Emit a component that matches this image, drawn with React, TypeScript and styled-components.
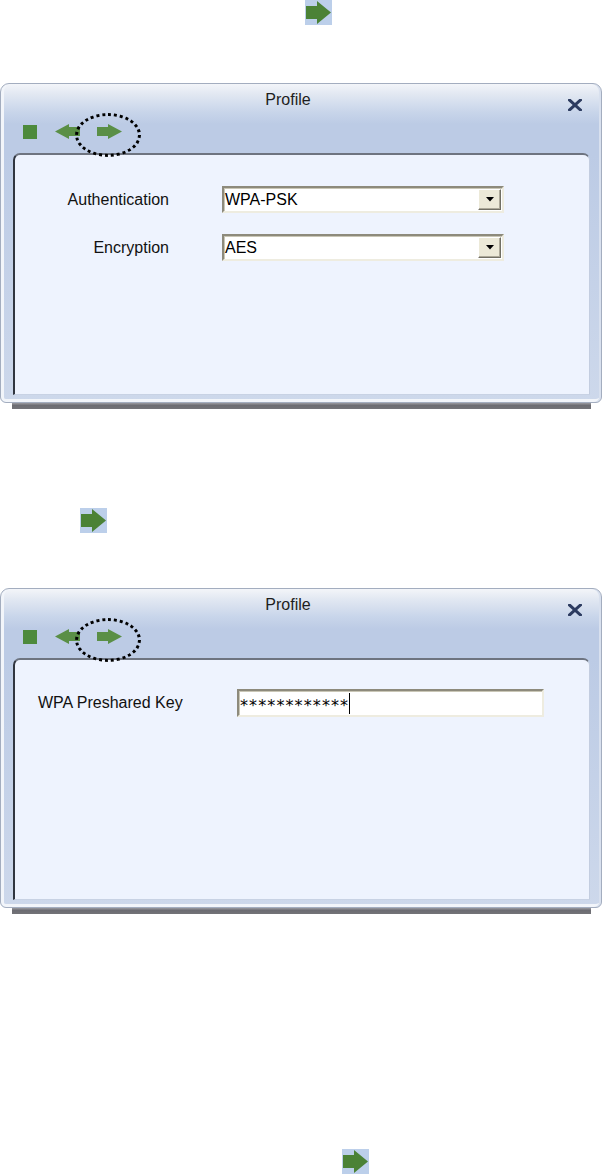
import React from "react";
import styled, { createGlobalStyle } from "styled-components";

const Global = createGlobalStyle`
  html, body { margin: 0; padding: 0; background: #ffffff; }
  body { font-family: "Liberation Sans", Arial, sans-serif; }
  * { box-sizing: border-box; }
`;

const Page = styled.div`
  width: 602px;
  height: 1174px;
  overflow: hidden;
  background: #ffffff;
  display: flex;
  flex-direction: column;
`;

const IconLine = styled.div<{ $left: number; $top: number }>`
  display: flex;
  padding-left: ${(p) => p.$left}px;
  margin-top: ${(p) => p.$top}px;
  height: 25px;
  flex: none;
`;

const IconBox = styled.div`
  width: 27px;
  height: 25px;
  background: #bccfea;
  display: flex;
`;

const DialogWrap = styled.div<{ $top: number }>`
  margin-top: ${(p) => p.$top}px;
  width: 602px;
  flex: none;
  display: flex;
  flex-direction: column;
`;

const Window = styled.div`
  position: relative;
  height: 320px;
  border: 1px solid #a3adbf;
  border-radius: 9px 9px 6px 6px;
  background: linear-gradient(
    to bottom,
    #f3f5f9 0px,
    #e2e8f2 10px,
    #c8d5ea 28px,
    #bccbe5 40px,
    #bccbe5 70px,
    #cdd8eb 100%
  );
  box-shadow: inset 3px 0 0 #f2f5fa, inset -2px 0 0 #d8e0ee, inset 0 -3px 0 #f2f5fa;
  display: flex;
  flex-direction: column;
`;

const TitleBar = styled.div`
  height: 29px;
  display: grid;
  grid-template-columns: 1fr auto 1fr;
  align-items: start;
`;

const Title = styled.div`
  grid-column: 2;
  padding-top: 7px;
  margin-right: 26px;
  font-size: 16px;
  line-height: 18px;
  color: #1e1e1e;
`;

const Close = styled.div`
  grid-column: 3;
  justify-self: end;
  margin-top: 15px;
  margin-right: 19px;
  width: 14px;
  height: 12px;
  display: flex;
`;

const Toolbar = styled.div`
  position: relative;
  height: 40px;
  display: flex;
  align-items: flex-start;
  padding-left: 22px;
  padding-top: 11px;
`;

const StopSquare = styled.div`
  width: 14px;
  height: 14px;
  margin-top: 1px;
  background: #4d8a3c;
`;

const ToolArrow = styled.div<{ $gap: number }>`
  margin-left: ${(p) => p.$gap}px;
  width: 25px;
  height: 15px;
  display: flex;
`;

const Ellipse = styled.div`
  position: absolute;
  left: 74px;
  top: 0px;
  width: 66px;
  height: 44px;
  border: 3px dotted #000000;
  border-radius: 50%;
`;

const Panel = styled.div`
  flex: 1;
  margin: 0 11px 7px 12px;
  background: #eef3fe;
  border-top: 2px solid #6e7480;
  border-left: 2px solid #30353f;
  border-right: 1px solid #c3cde0;
  border-bottom: 1px solid #c8d2e4;
  border-radius: 7px 7px 0 0;
`;

const Form = styled.div<{ $pt: number; $pl: number; $labelW: number; $gap: number; $fieldW: number }>`
  display: grid;
  grid-template-columns: ${(p) => p.$labelW}px ${(p) => p.$fieldW}px;
  column-gap: ${(p) => p.$gap}px;
  row-gap: 21px;
  padding-top: ${(p) => p.$pt}px;
  padding-left: ${(p) => p.$pl}px;
  align-items: center;
`;

const Label = styled.div<{ $align: "left" | "right" }>`
  text-align: ${(p) => p.$align};
  font-size: 16px;
  line-height: 18px;
  color: #111111;
`;

const FieldBox = styled.div<{ $h: number }>`
  height: ${(p) => p.$h}px;
  background: #ffffff;
  border-style: solid;
  border-width: 2px;
  border-color: #8d8a7c #eeece0 #eeece0 #8d8a7c;
  box-shadow: inset 1px 1px 0 #c9c6b6;
  display: flex;
  align-items: center;
  padding-left: 1px;
  font-size: 16px;
  color: #000000;
`;

const FieldText = styled.span`
  flex: 1;
  line-height: 18px;
`;

const DropButton = styled.div`
  width: 23px;
  height: 21px;
  margin-right: 1px;
  background: #ece9d8;
  border-style: solid;
  border-width: 1px;
  border-color: #ffffff #716f64 #716f64 #ffffff;
  box-shadow: inset -1px -1px 0 #aca899;
  display: flex;
  align-items: center;
  justify-content: center;
`;

const Stars = styled.span`
  font-family: "DejaVu Sans", sans-serif;
  font-size: 16px;
  letter-spacing: 1.1px;
  line-height: 18px;
  padding-top: 5px;
`;

const Caret = styled.span`
  width: 1px;
  height: 21px;
  background: #000000;
  margin-left: 0px;
`;

const Shadow = styled.div`
  height: 6px;
  margin: 0 11px 0 12px;
  background: linear-gradient(to bottom, #9a9aa0, #6c6c72 40%, #737378);
`;

const BigArrow = () => (
  <svg width="27" height="25" viewBox="0 0 27 25">
    <polygon points="1,6 12,6 12,1 26,12.5 12,24 12,19 1,19" fill="#4b8236" />
  </svg>
);

const SmallArrow = ({ dir }: { dir: "left" | "right" }) => (
  <svg width="25" height="15" viewBox="0 0 25 15">
    <polygon
      points={
        dir === "right"
          ? "0,3 11,3 11,0 25,7.5 11,15 11,12 0,12"
          : "25,3 14,3 14,0 0,7.5 14,15 14,12 25,12"
      }
      fill="#5a8f46"
    />
  </svg>
);

const CloseIcon = () => (
  <svg width="14" height="12" viewBox="0 0 14 12">
    <path d="M1.5 1 L12.5 11 M12.5 1 L1.5 11" stroke="#2c3b60" strokeWidth="3" strokeLinecap="square" />
  </svg>
);

const Triangle = () => (
  <svg width="8" height="5" viewBox="0 0 8 5">
    <polygon points="0,0 8,0 4,4.5" fill="#000000" />
  </svg>
);

const Dialog = ({ top, children }: { top: number; children: React.ReactNode }) => (
  <DialogWrap $top={top}>
    <Window>
      <TitleBar>
        <Title>Profile</Title>
        <Close>
          <CloseIcon />
        </Close>
      </TitleBar>
      <Toolbar>
        <StopSquare />
        <ToolArrow $gap={18}>
          <SmallArrow dir="left" />
        </ToolArrow>
        <ToolArrow $gap={17}>
          <SmallArrow dir="right" />
        </ToolArrow>
        <Ellipse />
      </Toolbar>
      <Panel>{children}</Panel>
    </Window>
    <Shadow />
  </DialogWrap>
);

export default function App() {
  return (
    <>
      <Global />
      <Page>
        <IconLine $left={305} $top={0}>
          <IconBox>
            <BigArrow />
          </IconBox>
        </IconLine>

        <Dialog top={58}>
          <Form $pt={31} $pl={0} $labelW={154} $gap={53} $fieldW={282}>
            <Label $align="right">Authentication</Label>
            <FieldBox $h={27}>
              <FieldText>WPA-PSK</FieldText>
              <DropButton>
                <Triangle />
              </DropButton>
            </FieldBox>
            <Label $align="right">Encryption</Label>
            <FieldBox $h={27}>
              <FieldText>AES</FieldText>
              <DropButton>
                <Triangle />
              </DropButton>
            </FieldBox>
          </Form>
        </Dialog>

        <IconLine $left={80} $top={99}>
          <IconBox>
            <BigArrow />
          </IconBox>
        </IconLine>

        <Dialog top={55}>
          <Form $pt={29} $pl={23} $labelW={199} $gap={0} $fieldW={307}>
            <Label $align="left">WPA Preshared Key</Label>
            <FieldBox $h={28}>
              <Stars>************</Stars>
              <Caret />
            </FieldBox>
          </Form>
        </Dialog>

        <IconLine $left={342} $top={235}>
          <IconBox>
            <BigArrow />
          </IconBox>
        </IconLine>
      </Page>
    </>
  );
}
